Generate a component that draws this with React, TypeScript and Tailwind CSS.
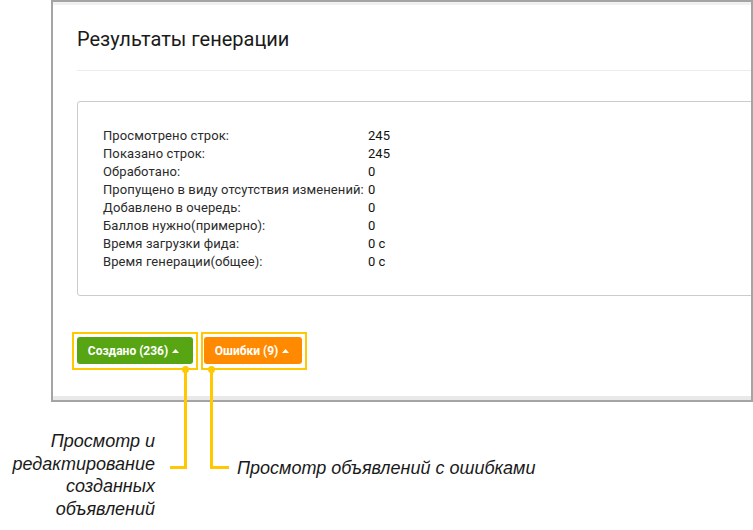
import React from 'react';

const stats: Array<[string, string]> = [
    ['Просмотрено строк:', '245'],
    ['Показано строк:', '245'],
    ['Обработано:', '0'],
    ['Пропущено в виду отсутствия изменений:', '0'],
    ['Добавлено в очередь:', '0'],
    ['Баллов нужно(примерно):', '0'],
    ['Время загрузки фида:', '0 с'],
    ['Время генерации(общее):', '0 с'],
];

const Caret = () => (
    <svg width="7" height="4" viewBox="0 0 7 4" className="ml-[4px]">
        <path d="M0 4 L3.5 0 L7 4 Z" fill="white" />
    </svg>
);

export default function App() {
    return (
        <div className="relative w-[753px] h-[530px] bg-white overflow-hidden font-['Roboto',sans-serif]">
            {/* Screenshot frame */}
            <div className="ml-[51px] w-[702px] h-[402px] border-2 border-[#a4a4a4] bg-white flex flex-col overflow-hidden">
                <div className="h-[3px] bg-[#f1f1f1] shrink-0" />
                <div className="flex-1 pl-[24px] overflow-hidden">
                    <h1 className="pt-[22px] text-[20px] leading-[24px] text-[#1a1a1a] font-normal">Результаты генерации</h1>
                    <div className="mt-[19px] h-px w-[700px] bg-[#ececec]" />

                    <div className="mt-[30px] w-[700px] h-[195px] border border-[#cccccc] rounded-[3px] pl-[25px] pt-[25px]">
                        <div className="grid grid-cols-[auto_auto] justify-start gap-x-[4px] text-[13px] leading-[18px] tracking-[0.1px] text-[#2b2b2b]">
                            {stats.map(([label, value]) => (
                                <React.Fragment key={label}>
                                    <span>{label}</span>
                                    <span className="text-[#111]">{value}</span>
                                </React.Fragment>
                            ))}
                        </div>
                    </div>

                    <div className="mt-[36px] flex items-center gap-[3px] -ml-[5px]">
                        <div className="w-[126px] h-[38px] border-2 border-[#ffc800] pl-[3px] pt-[3px]">
                            <button className="w-[116px] h-[27px] rounded-[3px] bg-[#58a514] text-white text-[12px] font-bold flex items-center justify-center pr-[3px]">
                                Создано (236)
                                <Caret />
                            </button>
                        </div>
                        <div className="w-[106px] h-[38px] border-2 border-[#ffc800] pl-px pt-[3px]">
                            <button className="w-[98px] h-[27px] rounded-[3px] bg-[#ff8a00] text-white text-[12px] font-bold flex items-center justify-center pr-[2px]">
                                Ошибки (9)
                                <Caret />
                            </button>
                        </div>
                    </div>
                </div>
                <div className="h-[4px] bg-[#e9e9e9] shrink-0" />
            </div>

            {/* Callouts */}
            <div className="flex text-[18px] leading-[22.5px] italic text-[#1a1a1a] font-['Liberation_Sans',Arial,sans-serif]">
                <div className="w-[155px] pt-[28px] text-right">
                    Просмотр и<br />редактирование<br />созданных<br />объявлений
                </div>
                <div className="ml-[82px] pt-[55px]">Просмотр объявлений с ошибками</div>
            </div>

            {/* Connector lines */}
            <div className="absolute left-[182px] top-[366px] w-[7px] h-[7px] rounded-full bg-[#ffc800]" />
            <div className="absolute left-[184px] top-[369px] w-[3px] h-[100px] bg-[#ffc800]" />
            <div className="absolute left-[170px] top-[466px] w-[17px] h-[3px] bg-[#ffc800]" />
            <div className="absolute left-[208px] top-[366px] w-[7px] h-[7px] rounded-full bg-[#ffc800]" />
            <div className="absolute left-[210px] top-[369px] w-[3px] h-[100px] bg-[#ffc800]" />
            <div className="absolute left-[210px] top-[466px] w-[19px] h-[3px] bg-[#ffc800]" />
        </div>
    );
}
